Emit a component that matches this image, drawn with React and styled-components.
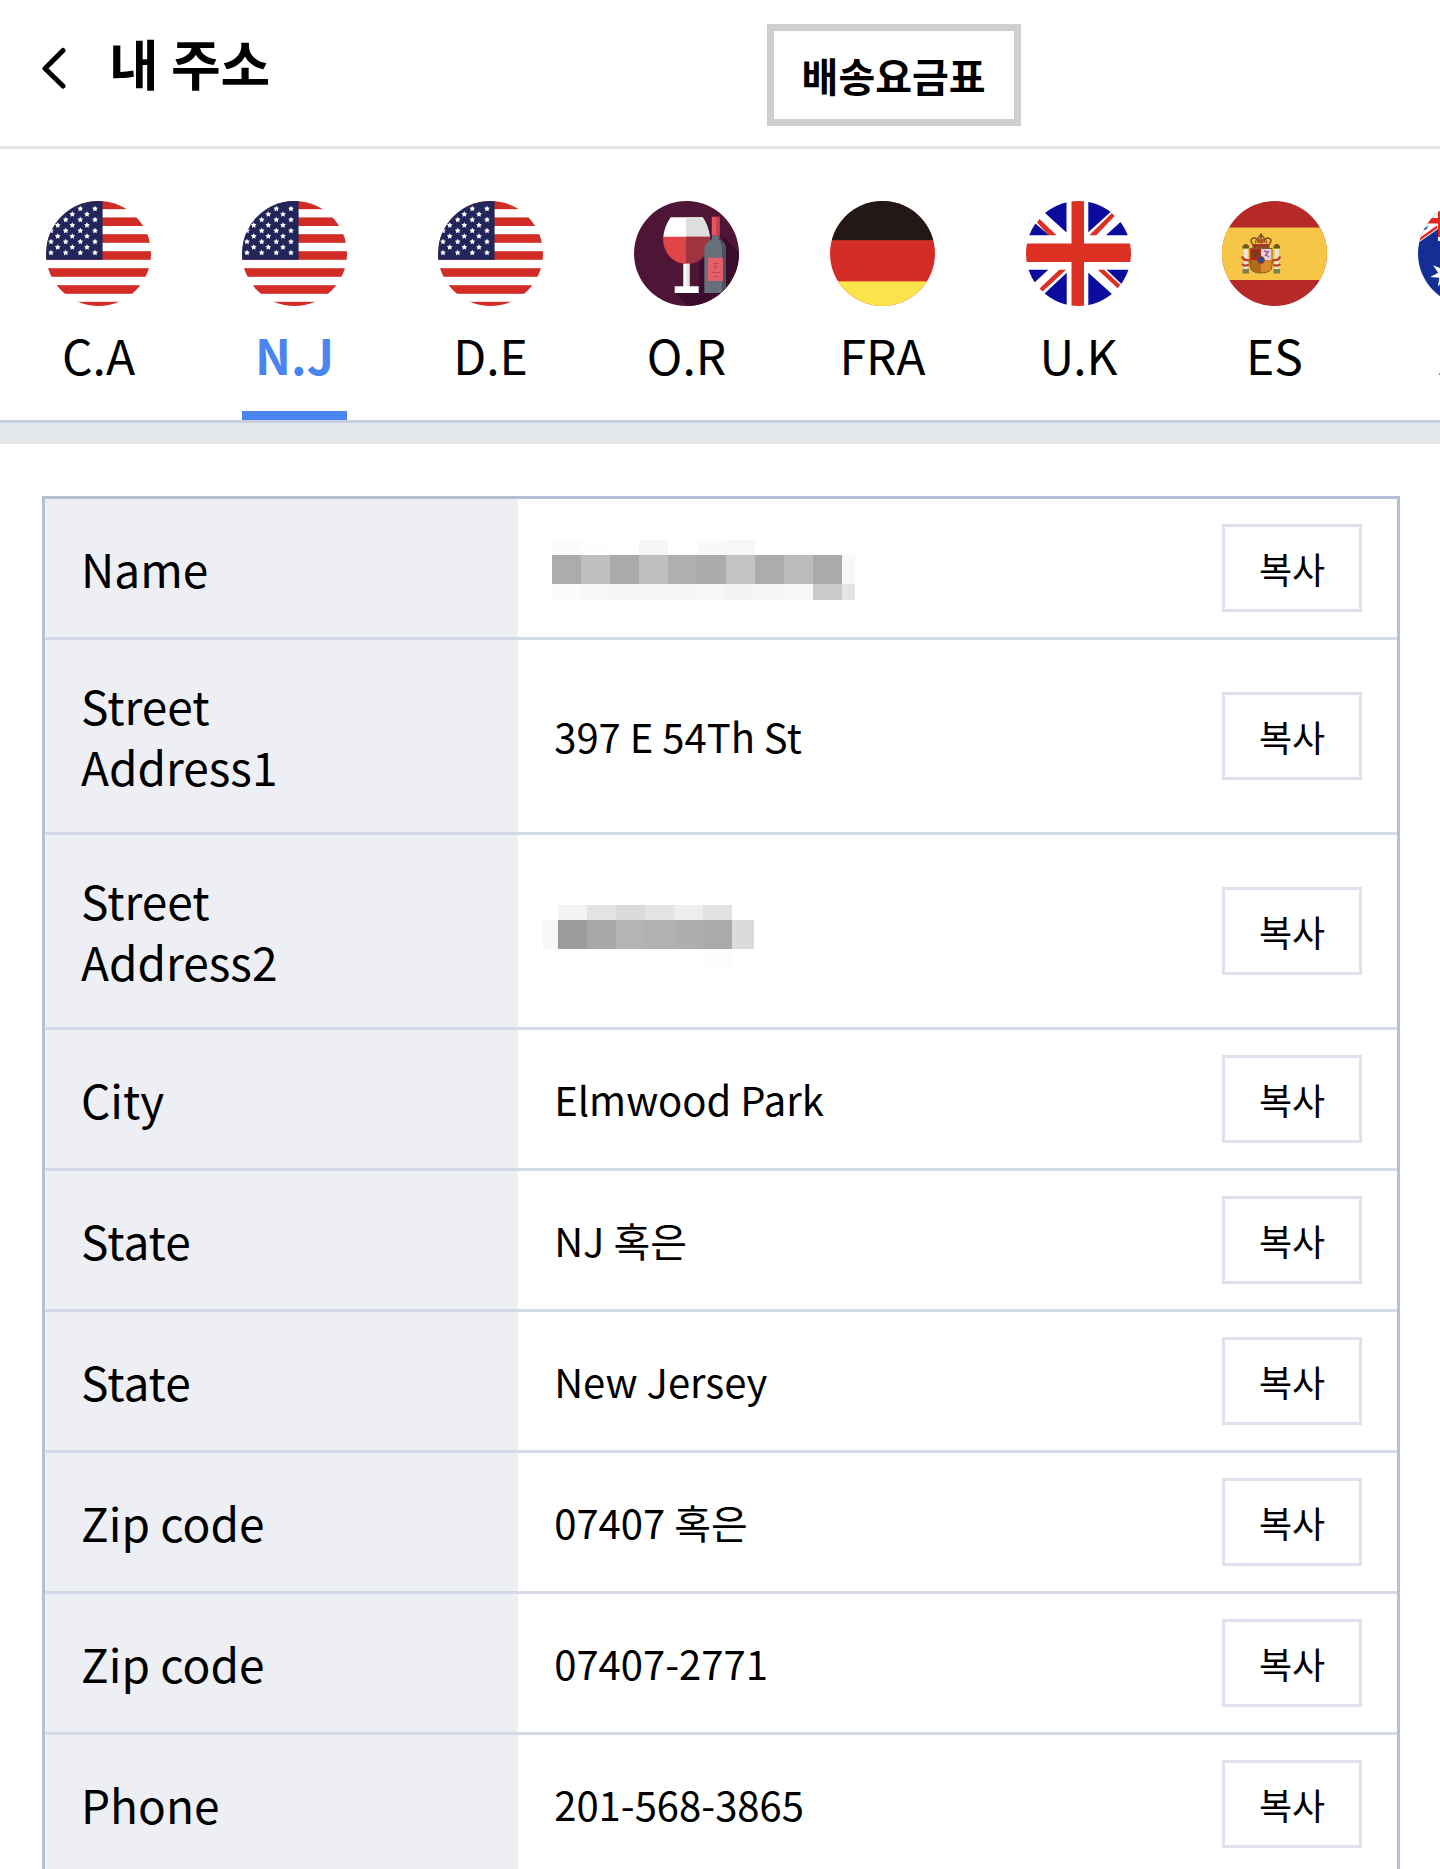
import React, { useState } from "react";
import styled, { createGlobalStyle } from "styled-components";

const GlobalStyle = createGlobalStyle`
  *, *::before, *::after { box-sizing: border-box; }
  body { margin: 0; background: #fff; }
  button { font: inherit; color: inherit; }
`;

const Page = styled.div`
  display: flex;
  flex-direction: column;
  height: 100vh;
  background: #fff;
  color: #000;
  font-family: "Noto Sans CJK KR", "Noto Sans", sans-serif;
`;

const Header = styled.header`
  display: grid;
  grid-template-columns: 1fr auto 30%;
  align-items: start;
  flex: none;
  padding: 24px 0 20px 42px;
  border-bottom: 3px solid #e3e5ea;
`;

const HeaderStart = styled.div`
  display: flex;
  align-items: flex-start;
  gap: 43px;
`;

const BackButton = styled.button`
  display: flex;
  padding: 23px 0;
  border: 0;
  background: none;
  cursor: pointer;
`;

const Title = styled.h1`
  margin: 0;
  font-size: 54px;
  font-weight: 700;
  line-height: 78px;
`;

const RateButton = styled.button`
  height: 102px;
  padding: 0 28px;
  border: 7px solid #cfcfcf;
  background: #fff;
  font-size: 40px;
  font-weight: 700;
  line-height: 84px;
  cursor: pointer;
`;

const TabBar = styled.nav`
  display: flex;
  flex: none;
  gap: 91px;
  overflow-x: auto;
  scrollbar-width: none;
  padding: 52px 46px 0;
  border-bottom: 3px solid #c8cfe0;
`;

const Tab = styled.button`
  display: flex;
  flex: none;
  flex-direction: column;
  align-items: center;
  width: 105px;
  padding: 0 0 23px;
  border: 0;
  border-bottom: 9px solid ${(p) => (p.$active ? "#4a84f0" : "transparent")};
  background: none;
  color: ${(p) => (p.$active ? "#4a84f0" : "#000")};
  font-size: 48px;
  font-weight: ${(p) => (p.$active ? 700 : 400)};
  line-height: 68px;
  white-space: nowrap;
  cursor: pointer;
`;

const Flag = styled.svg`
  display: block;
  width: 105px;
  height: 105px;
  margin-bottom: 14px;
  border-radius: 50%;
`;

const Band = styled.div`
  flex: none;
  height: 21px;
  background: #e3e7ea;
`;

const Content = styled.main`
  flex: 1;
  min-height: 0;
  overflow-y: auto;
  scrollbar-width: none;
  padding: 52px 40px 52px 42px;
`;

const AddressTable = styled.table`
  width: 100%;
  table-layout: fixed;
  border: 3px solid #b6c0d4;
  border-spacing: 0;
`;

const LabelCol = styled.col`
  width: 35%;
`;

const ActionCol = styled.col`
  width: 210px;
`;

const Row = styled.tr`
  & + & > * {
    border-top: 3px solid #d4dae7;
  }
`;

const Label = styled.th`
  padding: 35px 120px 35px 36px;
  background: #eeeff5;
  font-size: 46px;
  font-weight: 400;
  line-height: 61px;
  text-align: left;
`;

const Value = styled.td`
  padding: 0 0 0 36px;
  font-size: 40px;
  line-height: 61px;
`;

const Action = styled.td`
  padding: 25px 35px;
`;

const CopyButton = styled.button`
  display: block;
  width: 100%;
  height: 88px;
  padding: 0;
  border: 3px solid #dde2ec;
  background: #fff;
  font-size: 36px;
  line-height: 80px;
  text-align: center;
  cursor: pointer;
`;

const Mosaic = styled.svg`
  display: block;
  overflow: visible;
`;

const starPoints = (cx, cy, outer, inner, tips = 5) =>
  Array.from({ length: tips * 2 }, (_, i) => {
    const r = i % 2 ? inner : outer;
    const a = (Math.PI * i) / tips - Math.PI / 2;
    return `${cx + r * Math.cos(a)},${cy + r * Math.sin(a)}`;
  }).join(" ");

function FlagUS() {
  const stars = [];
  for (let row = 0; row < 9; row++) {
    const columns = row % 2 ? [11.7, 26.3, 41] : [5, 19.7, 34.3, 49];
    columns.forEach((x) => stars.push([x, 7.7 + row * 5.5]));
  }
  return (
    <Flag viewBox="0 0 105 105" aria-hidden="true">
      <rect width="105" height="105" fill="#fff" />
      {[-0.4, 16.4, 33.2, 50.2, 67.2, 84.2, 100.8].map((y) => (
        <rect key={y} y={y} width="105" height="8.6" fill="#d12d26" />
      ))}
      <rect width="56.6" height="58.8" fill="#23265a" />
      {stars.map(([x, y]) => (
        <polygon key={`${x}-${y}`} points={starPoints(x, y, 3, 1.6)} fill="#fff" />
      ))}
    </Flag>
  );
}

function Wine() {
  return (
    <Flag viewBox="0 0 105 105" aria-hidden="true">
      <rect width="105" height="105" fill="#4f1536" />
      <path d="M90 36 105 52V105H55L41 92H65V63L76 50Z" fill="#3c0c2d" />
      <path d="M36.7 16.3H68.7Q75 26 75.7 36H29.3Q30 26 36.7 16.3Z" fill="#fff" />
      <path d="M52 16.3H68.7Q75 26 75.7 36H52Z" fill="#dedede" />
      <path d="M29.3 35.8H75.8C77 51 66 63 52.5 63S28 51 29.3 35.8Z" fill="#e04547" />
      <path d="M52 35.8H75.8C77 51 66 63 52 63Z" fill="#9e3440" />
      <path d="M49.3 62.8H55.5V85.3H64.7V92H40.7V85.3H49.3Z" fill="#fff" />
      <path d="M52.5 62.8H55.5V85.3H52.5Z" fill="#e3e3e3" />
      <path d="M78 34.5H86V38Q92 42 92 49V92H70.3V49Q70.3 42 78 38Z" fill="#65707b" />
      <path d="M84 34.5H86V38Q92 42 92 49V92H88V49Q88 42 84 38Z" fill="#4a535e" />
      <path d="M77.8 15.7H85.5V34.5H77.8Z" fill="#e15660" />
      <path d="M82 15.7H85.5V34.5H82Z" fill="#c84250" />
      <rect x="74" y="56.7" width="15" height="23.3" fill="#e55e69" />
      <path d="M78.5 62.5h6M79.5 65h4M81.5 65v3M77.5 71.5h8.5M79.5 75.5h4.5" stroke="#b8465a" strokeWidth="1.2" fill="none" />
    </Flag>
  );
}

function FlagGermany() {
  return (
    <Flag viewBox="0 0 105 105" aria-hidden="true">
      <rect width="105" height="105" fill="#d42d27" />
      <rect width="105" height="39.2" fill="#231815" />
      <rect y="80.4" width="105" height="24.6" fill="#fbe34c" />
    </Flag>
  );
}

function FlagUK() {
  return (
    <Flag viewBox="0 0 105 105" aria-hidden="true">
      <rect width="105" height="105" fill="#fff" />
      <path
        fill="#0b0b9e"
        d="M40.5 0V31.5L19.5 12.5 10 0ZM62.3 0V31.3L84 11.5 95 0ZM3 34.3H23L10 23 0 14ZM80 34.3H105V12L94.7 20.7ZM0 68.7H22.3L9 81 0 88ZM40.7 71.7V105H8L18.3 92.7ZM62.3 71.7V105H98L85.7 92.7ZM80.7 68.7H105V92L94.7 82.3Z"
      />
      <path
        fill="#dc3022"
        d="M45.5 0H58V42.5H105V61H58V105H45.5V61H0V42.5H45.5ZM13.5 18 11 21.5 22.5 34.3H30.5ZM86 12 88.7 15 70.3 34.3H63.3ZM33.3 68.7H40L16.3 90.7 13.3 87.7ZM71.7 68.7H78L94.3 84 91.7 87.3Z"
      />
    </Flag>
  );
}

function FlagSpain() {
  return (
    <Flag viewBox="0 0 105 105" aria-hidden="true">
      <rect width="105" height="105" fill="#b62929" />
      <rect y="26.5" width="105" height="52.5" fill="#f7c646" />
      {[20.5, 51.5].map((x) => (
        <g key={x}>
          <rect x={x + 1.3} y="48" width="4" height="20" fill="#e8e6e0" />
          <path d={`M${x} 47.5h6.6v-3h-1.6v-1.5h-3.4v1.5h-1.6z`} fill="#6b5a1c" />
          <path d={`M${x} 68h6.6v4.5h-6.6z`} fill="#7b8354" />
        </g>
      ))}
      <path d="M20 55.5q1.500 4 5.500 3.500 3 0 3 3.500M20 63q3 3 7 .5M58.300 55.500q-1.500 4-5.500 3.500-3 0-3 3.500M58.300 63q-3 3-7 .5" fill="none" stroke="#b8432b" strokeWidth="2.2" />
      <path d="M31 47 30 43H48L47 47Z" fill="#a3382a" />
      <path d="M30.500 43q-3.500-5 1.500-6 3.500 0 4 5M47.500 43q3.500-5-1.500-6-3.500 0-4 5M36 42q-1-7 3-7t3 7M30.500 46.500h17M39 32.500v10M37.500 34h3" fill="none" stroke="#7d5520" strokeWidth="1.600" />
      <path d="M33.500 39.500v3M44.500 39.500v3M37.500 38v4M40.500 38v4" fill="none" stroke="#b8432b" strokeWidth="1.500" />
      <path d="M28 47.5H39V59H28Z" fill="#b3261f" />
      <path d="M39 47.5H50V59H39Z" fill="#e6d3d9" />
      <path d="M28 59H39V72Q28 72 28 65Z" fill="#b06a1c" />
      <path d="M39 59H50V65Q50 72 39 72Z" fill="#d68a2a" />
      <path d="M31.5 56v-4.5h1v-2h3v2h1v4.5z" fill="#5a4a18" />
      <path d="M42 50l4 1-2 3 3 2M47 50l-4 5" stroke="#b04f9a" strokeWidth="1.3" fill="none" />
      <path d="M28 47.5H50V65Q50 72 39 72T28 65Z" fill="none" stroke="#8a5a24" strokeWidth="1" />
      <circle cx="39" cy="59" r="3.4" fill="#2b4a86" stroke="#a5342c" strokeWidth="1" />
    </Flag>
  );
}

function FlagAustralia() {
  return (
    <Flag viewBox="0 0 105 105" aria-hidden="true">
      <rect width="105" height="105" fill="#132f94" />
      <path d="M0 0H58V40H20L20 28 0 42Z" fill="#fff" />
      <path d="M0 17H58V22.5H0ZM20 0H29V40H22V36L20 36Z" fill="#e0281f" />
      <path d="M0 38 19 24.5V27.5L0 41Z" fill="#e0281f" />
      <path d="M4 29 11 24.5 8 28.5Z" fill="#132f94" />
      <polygon points={starPoints(26, 73, 14, 6, 7)} fill="#fff" />
      <polygon points={starPoints(76, 24, 6, 3, 7)} fill="#fff" />
      <polygon points={starPoints(76, 82, 6, 3, 7)} fill="#fff" />
      <polygon points={starPoints(92, 44, 6, 3, 7)} fill="#fff" />
      <polygon points={starPoints(62, 50, 6, 3, 7)} fill="#fff" />
    </Flag>
  );
}

const TABS = [
  { id: "ca", label: "C.A", Icon: FlagUS },
  { id: "nj", label: "N.J", Icon: FlagUS },
  { id: "de", label: "D.E", Icon: FlagUS },
  { id: "or", label: "O.R", Icon: Wine },
  { id: "fra", label: "FRA", Icon: FlagGermany },
  { id: "uk", label: "U.K", Icon: FlagUK },
  { id: "es", label: "ES", Icon: FlagSpain },
  { id: "au", label: "AU", Icon: FlagAustralia },
];

const grey = (v) => `rgb(${v}, ${v}, ${v})`;

/* Hidden values are shown as a strip of grey blocks, 29px to a block. */
function NameMosaic() {
  const top = [251, 254, 255, 246, 255, 249, 247];
  const middle = [172, 191, 170, 191, 175, 171, 195, 172, 188, 170];
  const bottom = [251, 248, 246, 245, 245, 247, 244, 246, 248, 203];
  return (
    <Mosaic width="303" height="56" viewBox="2 0 303 56" role="img" aria-label="Hidden name">
      {top.map((v, i) => (
        <rect key={i} x={i * 29} width="29" height="15" fill={grey(v)} />
      ))}
      {middle.map((v, i) => (
        <rect key={i} x={i * 29} y="15" width="29" height="29" fill={grey(v)} />
      ))}
      {bottom.map((v, i) => (
        <rect key={i} x={i * 29} y="44" width="29" height="16" fill={grey(v)} />
      ))}
      <rect x="290" y="15" width="13" height="29" fill={grey(248)} />
      <rect x="290" y="44" width="13" height="16" fill={grey(228)} />
    </Mosaic>
  );
}

function UnitMosaic() {
  const top = [243, 228, 219, 228, 238, 226];
  const middle = [155, 168, 180, 177, 174, 170];
  return (
    <Mosaic width="200" height="52" viewBox="11 0 200 52" role="img" aria-label="Hidden unit">
      {top.map((v, i) => (
        <rect key={i} x={15 + i * 29} width="29" height="15" fill={grey(v)} />
      ))}
      <rect y="15" width="15" height="29" fill={grey(247)} />
      {middle.map((v, i) => (
        <rect key={i} x={15 + i * 29} y="15" width="29" height="29" fill={grey(v)} />
      ))}
      <rect x="189" y="15" width="22" height="29" fill={grey(219)} />
      <rect x="160" y="44" width="29" height="21" fill={grey(253)} />
    </Mosaic>
  );
}

const ROWS = [
  { label: "Name", value: <NameMosaic /> },
  { label: "Street Address1", value: "397 E 54Th St" },
  { label: "Street Address2", value: <UnitMosaic /> },
  { label: "City", value: "Elmwood Park" },
  { label: "State", value: "NJ 혹은" },
  { label: "State", value: "New Jersey" },
  { label: "Zip code", value: "07407 혹은" },
  { label: "Zip code", value: "07407-2771" },
  { label: "Phone", value: "201-568-3865" },
];

export default function App() {
  const [active, setActive] = useState("nj");
  return (
    <Page>
      <GlobalStyle />
      <Header>
        <HeaderStart>
          <BackButton type="button" aria-label="Back">
            <svg width="24" height="42" viewBox="0 0 24 42" fill="none" stroke="#000" strokeWidth="5" strokeLinecap="round" strokeLinejoin="round">
              <path d="M21 3.5 3 21.5 21 39" />
            </svg>
          </BackButton>
          <Title>내 주소</Title>
        </HeaderStart>
        <RateButton type="button">배송요금표</RateButton>
      </Header>
      <TabBar>
        {TABS.map(({ id, label, Icon }) => (
          <Tab
            key={id}
            type="button"
            $active={id === active}
            aria-pressed={id === active}
            onClick={() => setActive(id)}
          >
            <Icon />
            {label}
          </Tab>
        ))}
      </TabBar>
      <Band />
      <Content>
        <AddressTable>
          <colgroup>
            <LabelCol />
            <col />
            <ActionCol />
          </colgroup>
          <tbody>
            {ROWS.map(({ label, value }, i) => (
              <Row key={i}>
                <Label scope="row">{label}</Label>
                <Value>{value}</Value>
                <Action>
                  <CopyButton type="button">복사</CopyButton>
                </Action>
              </Row>
            ))}
          </tbody>
        </AddressTable>
      </Content>
    </Page>
  );
}
